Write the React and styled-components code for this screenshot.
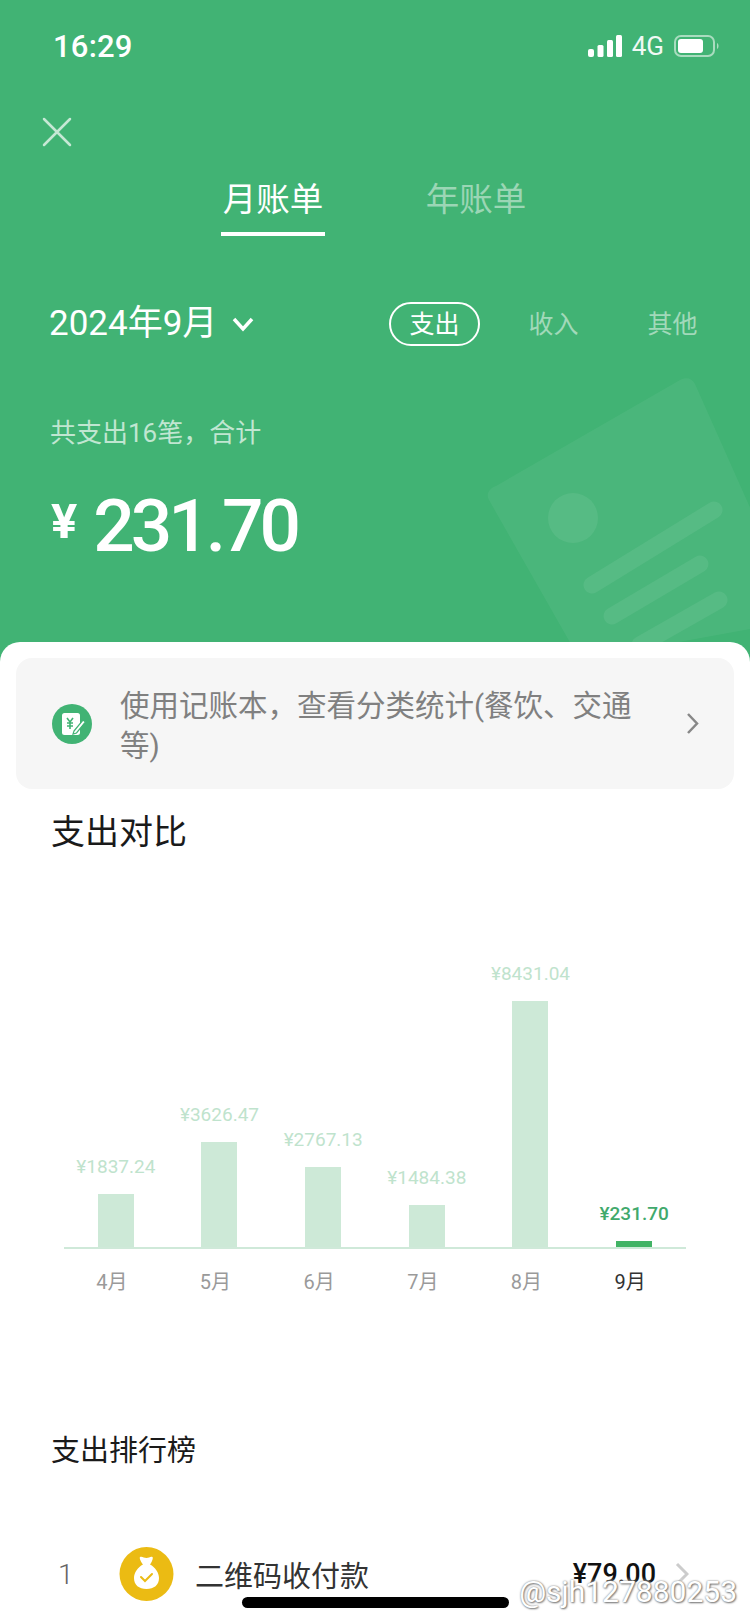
import styled, { createGlobalStyle } from "styled-components";

const GlobalStyle = createGlobalStyle`
  html, body {
    margin: 0;
    padding: 0;
    background: #fff;
  }
  body {
    font-family: Roboto, "Noto Sans CJK SC", sans-serif;
  }
`;

const Page = styled.div`
  position: relative;
  width: 750px;
  height: 1624px;
  overflow: hidden;
  display: flex;
  flex-direction: column;
  background: #41b374;
`;

const Header = styled.header`
  position: relative;
  height: 642px;
  flex-shrink: 0;
  overflow: hidden;
  color: #fff;
`;

const Decoration = styled.svg`
  position: absolute;
  left: 0;
  top: 0;
`;

const StatusBar = styled.div`
  position: relative;
  height: 92px;
  display: flex;
  align-items: center;
  justify-content: space-between;
  padding: 0 30px 0 53px;
`;

const Time = styled.span`
  font-size: 31px;
  font-weight: 500;
  letter-spacing: 0.2px;
`;

const StatusIcons = styled.div`
  display: flex;
  align-items: center;
  gap: 10px;
`;

const Network = styled.span`
  font-size: 26px;
  line-height: 24px;
  color: #f0f9f4;
`;

const CloseButton = styled.button`
  display: block;
  margin: 25px 0 0 42px;
  padding: 0;
  border: 0;
  background: none;
  width: 30px;
  height: 30px;
`;

const Tabs = styled.div`
  display: flex;
  gap: 99px;
  margin: 30px 0 0 221px;
`;

const Tab = styled.div`
  width: 104px;
  text-align: center;
  font-size: 33.5px;
  line-height: 46px;
  color: ${(p) => (p.$active ? "#fff" : "#9bd6b5")};
  &::after {
    content: "";
    display: block;
    height: 4px;
    margin-top: 9px;
    background: ${(p) => (p.$active ? "#fff" : "transparent")};
  }
`;

const FilterRow = styled.div`
  display: flex;
  align-items: center;
  justify-content: space-between;
  margin-top: 65px;
  padding: 0 32px 0 49px;
`;

const DatePicker = styled.div`
  display: flex;
  align-items: center;
  gap: 14px;
  font-size: 35px;
  line-height: 46px;
`;

const Filters = styled.div`
  display: flex;
  gap: 28px;
`;

const Filter = styled.div`
  box-sizing: border-box;
  width: 91px;
  height: 44px;
  border-radius: 22px;
  border: 2px solid ${(p) => (p.$active ? "#fff" : "transparent")};
  font-size: 25px;
  line-height: 42px;
  text-align: center;
  color: ${(p) => (p.$active ? "#fff" : "#a2d9ba")};
`;

const Summary = styled.div`
  margin: 70px 0 0 50px;
  font-size: 26px;
  line-height: 32px;
  color: #c0e6d1;
`;

const Amount = styled.div`
  display: flex;
  align-items: flex-start;
  gap: 16px;
  margin: 41px 0 0 51px;
  height: 72px;
`;

const Currency = styled.span`
  font-size: 49px;
  font-weight: 700;
  line-height: 56px;
  margin-top: 4px;
`;

const Total = styled.span`
  font-size: 73px;
  font-weight: 500;
  line-height: 72px;
  letter-spacing: -4px;
`;

const Sheet = styled.main`
  position: relative;
  flex: 1;
  padding-top: 16px;
  background: #fff;
  border-radius: 20px 20px 0 0;
`;

const Banner = styled.div`
  display: flex;
  align-items: center;
  height: 131px;
  margin: 0 16px;
  padding: 0 35px 0 36px;
  border-radius: 16px;
  background: #f6f6f6;
`;

const BannerText = styled.div`
  width: 530px;
  margin-left: 28px;
  padding-top: 5px;
  font-size: 29.5px;
  line-height: 40px;
  color: #808080;
`;

const BannerChevron = styled.svg`
  margin-left: auto;
`;

const SectionTitle = styled.h2`
  margin: ${(p) => p.$top}px 0 0 51px;
  font-size: ${(p) => p.$size}px;
  line-height: ${(p) => p.$line}px;
  font-weight: 400;
  color: #1a1a1a;
`;

const Chart = styled.div`
  display: grid;
  grid-template-columns: repeat(6, 1fr);
  align-items: end;
  height: 395px;
  margin: 0 64px;
  border-bottom: 2px solid #cfe9d9;
  box-sizing: border-box;
`;

const Column = styled.div`
  display: flex;
  flex-direction: column;
  align-items: center;
`;

const BarLabel = styled.div`
  margin-bottom: 14px;
  font-size: 19px;
  line-height: 26px;
  white-space: nowrap;
  font-weight: ${(p) => (p.$current ? 500 : 400)};
  color: ${(p) => (p.$current ? "#41a96c" : "#bfe3cd")};
`;

const Bar = styled.div`
  width: 36px;
  height: ${(p) => p.$height}px;
  background: ${(p) => (p.$current ? "#41b365" : "#cde9d7")};
`;

const Months = styled.div`
  display: grid;
  grid-template-columns: repeat(6, 1fr);
  margin: 19px 68px 0 60px;
`;

const Month = styled.div`
  text-align: center;
  font-size: 20px;
  line-height: 28px;
  color: ${(p) => (p.$current ? "#333" : "#9a9a9a")};
`;

const RankRow = styled.div`
  display: flex;
  align-items: center;
  height: 54px;
  margin-top: 76px;
  padding: 0 61px 0 58px;
`;

const RankIndex = styled.span`
  width: 61px;
  font-size: 28px;
  font-weight: 300;
  color: #666;
`;

const RankIcon = styled.svg`
  flex-shrink: 0;
`;

const RankName = styled.span`
  flex: 1;
  margin-left: 21px;
  font-size: 29px;
  color: #333;
`;

const RankAmount = styled.span`
  font-size: 27px;
  font-weight: 500;
  color: #111;
  margin-right: 19px;
`;

const HomeIndicator = styled.div`
  position: absolute;
  left: 242px;
  top: 1597px;
  width: 267px;
  height: 11px;
  border-radius: 6px;
  background: #000;
`;

const Watermark = styled.div`
  position: absolute;
  right: 13px;
  top: 1573px;
  font-size: 30px;
  line-height: 38px;
  color: #fff;
  text-shadow: 0 0 2px #777, 1px 1px 2px #777, 0 0 4px #fff;
`;

const bars = [
  { month: "4月", amount: "¥1837.24", height: 53 },
  { month: "5月", amount: "¥3626.47", height: 105 },
  { month: "6月", amount: "¥2767.13", height: 80 },
  { month: "7月", amount: "¥1484.38", height: 42 },
  { month: "8月", amount: "¥8431.04", height: 246 },
  { month: "9月", amount: "¥231.70", height: 6, current: true },
];

function SignalIcon() {
  return (
    <svg width="34" height="22" viewBox="0 0 34 22" fill="#fff">
      <rect x="0" y="14" width="6" height="8" rx="2" />
      <rect x="9.5" y="10" width="6" height="12" rx="1.5" />
      <rect x="19" y="5" width="6" height="17" rx="1.5" />
      <rect x="28" y="0" width="6" height="22" rx="1.5" />
    </svg>
  );
}

function BatteryIcon() {
  return (
    <svg width="46" height="22" viewBox="0 0 46 22">
      <rect x="1" y="1" width="39" height="20" rx="6" fill="none" stroke="#a9dcbf" strokeWidth="2" />
      <rect x="4" y="4" width="25" height="14" rx="3" fill="#fff" />
      <path d="M43 8c2 1 2 5 0 6z" fill="#a9dcbf" />
    </svg>
  );
}

function LedgerIcon() {
  return (
    <svg width="40" height="40" viewBox="0 0 40 40">
      <circle cx="20" cy="20" r="20" fill="#41b374" />
      <rect x="10" y="9" width="18" height="22" rx="2.5" fill="#fff" />
      <path d="M15 14l3 4 3-4M18 18v7M15 19h6M15 22h6" fill="none" stroke="#41b374" strokeWidth="1.6" />
      <path d="M22 27l9-11 2.5 2-9 11-3.5 1z" fill="#fff" stroke="#41b374" strokeWidth="1.2" />
    </svg>
  );
}

function MoneyBagIcon() {
  return (
    <RankIcon width="55" height="54" viewBox="0 0 55 54">
      <circle cx="27.5" cy="27" r="27" fill="#ebbb13" />
      <path
        d="M21 10c2-1 4 1 6.500 1s4-2 6-1c1 1-1 6-2.500 7.500 5 2.500 9 8 9 13.500 0 7-5 11-12.500 11S15 38 15 31c0-5.500 4-11 9-13.500C22.500 16 20 11 21 10z"
        fill="#fff"
      />
      <path d="M22 30l4 4 7-7" fill="none" stroke="#ebbb13" strokeWidth="2" strokeLinecap="round" />
    </RankIcon>
  );
}

export default function App() {
  return (
    <Page>
      <GlobalStyle />
      <Header>
        <Decoration width="750" height="642" viewBox="0 0 750 642">
          <path d="M496 486L680 380c6-3 12-2 15 4L800 620 580 660 489 500c-3-5-1-11 7-14z" fill="#fff" fillOpacity="0.05" />
          <circle cx="573" cy="518" r="25" fill="#fff" fillOpacity="0.07" />
          <g stroke="#fff" strokeOpacity="0.07" strokeWidth="17" strokeLinecap="round">
            <path d="M592 585L714 510" />
            <path d="M612 616L700 564" />
            <path d="M640 645L719 600" />
          </g>
        </Decoration>
        <StatusBar>
          <Time>16:29</Time>
          <StatusIcons>
            <SignalIcon />
            <Network>4G</Network>
            <BatteryIcon />
          </StatusIcons>
        </StatusBar>
        <CloseButton aria-label="关闭">
          <svg width="30" height="30" viewBox="0 0 30 30" stroke="#c6e8d5" strokeWidth="2.500" strokeLinecap="round">
            <path d="M2 2l26 26M28 2L2 28" />
          </svg>
        </CloseButton>
        <Tabs>
          <Tab $active>月账单</Tab>
          <Tab>年账单</Tab>
        </Tabs>
        <FilterRow>
          <DatePicker>
            2024年9月
            <svg width="24" height="16" viewBox="0 0 24 16" fill="none" stroke="#fff" strokeWidth="3.500">
              <path d="M3 3l9 10 9-10" />
            </svg>
          </DatePicker>
          <Filters>
            <Filter $active>支出</Filter>
            <Filter>收入</Filter>
            <Filter>其他</Filter>
          </Filters>
        </FilterRow>
        <Summary>共支出16笔，合计</Summary>
        <Amount>
          <Currency>¥</Currency>
          <Total>231.70</Total>
        </Amount>
      </Header>
      <Sheet>
        <Banner>
          <LedgerIcon />
          <BannerText>使用记账本，查看分类统计(餐饮、交通等)</BannerText>
          <BannerChevron width="13" height="23" viewBox="0 0 13 23" fill="none" stroke="#888" strokeWidth="2.500">
            <path d="M2 2l9 9.500-9 9.500" />
          </BannerChevron>
        </Banner>
        <SectionTitle $top={21} $size={34} $line={44}>支出对比</SectionTitle>
        <Chart>
          {bars.map((b) => (
            <Column key={b.month}>
              <BarLabel $current={b.current}>{b.amount}</BarLabel>
              <Bar $height={b.height} $current={b.current} />
            </Column>
          ))}
        </Chart>
        <Months>
          {bars.map((b) => (
            <Month key={b.month} $current={b.current}>{b.month}</Month>
          ))}
        </Months>
        <SectionTitle $top={135} $size={29} $line={40}>支出排行榜</SectionTitle>
        <RankRow>
          <RankIndex>1</RankIndex>
          <MoneyBagIcon />
          <RankName>二维码收付款</RankName>
          <RankAmount>¥79.00</RankAmount>
          <svg width="14" height="24" viewBox="0 0 14 24" fill="none" stroke="#ccc" strokeWidth="3">
            <path d="M2 2l10 10L2 22" />
          </svg>
        </RankRow>
      </Sheet>
      <HomeIndicator />
      <Watermark>@sjh127880253</Watermark>
    </Page>
  );
}
